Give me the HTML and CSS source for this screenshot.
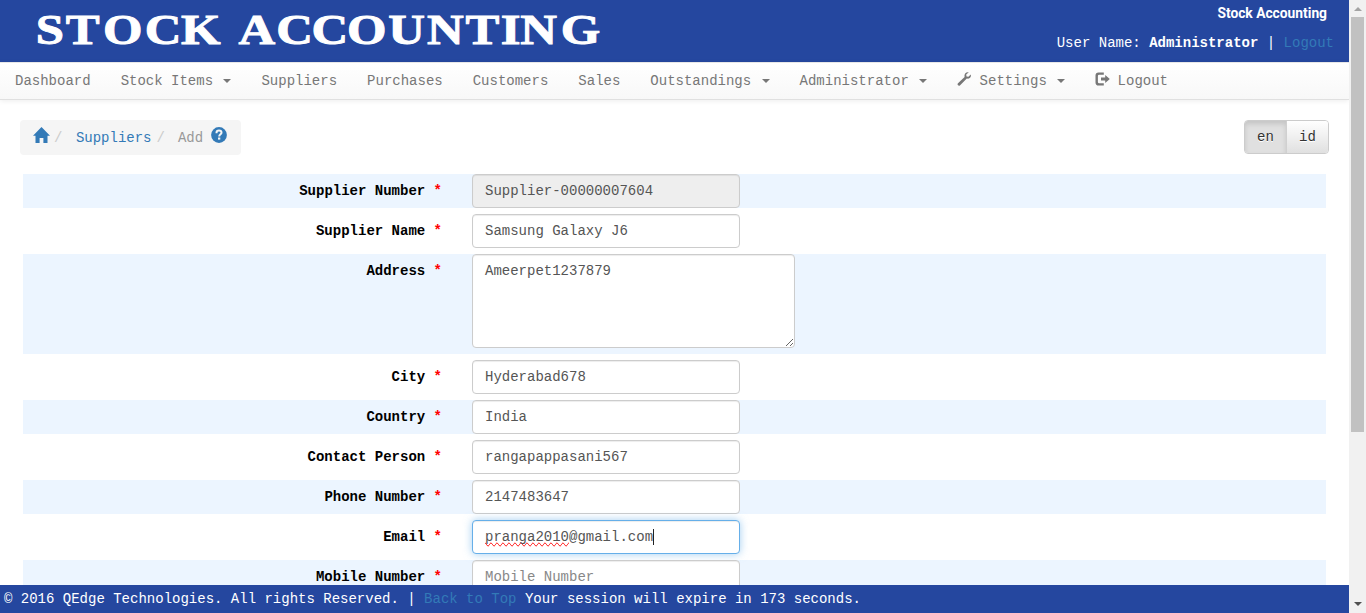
FILE: index.html
```html
<!DOCTYPE html>
<html lang="en">
<head>
<meta charset="utf-8">
<title>Stock Accounting</title>
<link rel="stylesheet" href="styles.css">
</head>
<body>
<div class="page">
  <header class="header">
    <svg class="brand" width="610" height="62" viewBox="0 0 610 62">
      <text transform="scale(1.21 1)" y="44" x="29.500 54.300 85.200 119.700 149.500 181.500 197.100 228.400 257.400 286.700 320.800 352.900 384.800 413.800 430 463.500">STOCK ACCOUNTING</text>
    </svg>
    <div class="account">
      <div class="company">Stock Accounting</div>
      <div class="user">User Name: <b>Administrator</b> | <a>Logout</a></div>
    </div>
  </header>
  <nav class="navbar">
    <a>Dashboard</a>
    <a>Stock Items <i class="caret"></i></a>
    <a>Suppliers</a>
    <a>Purchases</a>
    <a>Customers</a>
    <a>Sales</a>
    <a>Outstandings <i class="caret"></i></a>
    <a>Administrator <i class="caret"></i></a>
    <a><svg class="icon" width="14" height="14" viewBox="0 0 14 14"><path d="M11.800.3 9.200 2.500l.3 1.900 1.900.3L13.800 2.500c.3 1.500-.1 2.800-1.100 3.500-.9.700-1.900.8-2.900.5L2.900 13.400c-.6.5-1.300.4-1.900-.1-.6-.6-.6-1.400 0-2L7.600 5C6.900 2 8.800-.3 11.800.3z"/></svg> Settings <i class="caret"></i></a>
    <a><svg class="icon exit" width="15" height="14" viewBox="0 0 15 14"><path d="M8.800.5v2.300H4.200q-1.300 0-1.300 1.300v5.800q0 1.300 1.300 1.300h4.600v2.300H3.600Q.5 13.500.5 10.400V3.600Q.5.5 3.600.5zM10.200 3l4.600 4-4.600 4V8.600H6V5.400h4.200z"/></svg> Logout</a>
  </nav>
  <main class="content">
    <div class="toolbar">
      <div class="breadcrumb">
        <svg class="home" width="17" height="16" viewBox="0 0 17 16"><path d="M8.500 0 17 8.700h-2.500V16h-4.100v-5H6.600v5H2.500V8.700H0z"/></svg>
        <span class="slash first">/</span><a>Suppliers</a><span class="slash second">/</span><span class="current">Add</span>
        <svg class="help" width="16" height="16" viewBox="0 0 16 16"><circle cx="8" cy="8" r="7.900"/><path class="mark" d="M5.500 6.300V5.700C5.500 4.300 6.500 3.600 8 3.600s2.500.8 2.500 2.100c0 1.600-2.300 1.700-2.300 3.700"/><path class="dot" d="M7 10.500h2.300v2.100H7z"/></svg>
      </div>
      <div class="languages"><span class="active">en</span><span>id</span></div>
    </div>
    <form class="form">
      <div class="row"><label>Supplier Number <b>*</b></label><input class="field" value="Supplier-00000007604" readonly></div>
      <div class="row"><label>Supplier Name <b>*</b></label><input class="field" value="Samsung Galaxy J6"></div>
      <div class="row"><label>Address <b>*</b></label><textarea class="field" spellcheck="false">Ameerpet1237879</textarea></div>
      <div class="row"><label>City <b>*</b></label><input class="field" value="Hyderabad678"></div>
      <div class="row"><label>Country <b>*</b></label><input class="field" value="India"></div>
      <div class="row"><label>Contact Person <b>*</b></label><input class="field" value="rangapappasani567"></div>
      <div class="row"><label>Phone Number <b>*</b></label><input class="field" value="2147483647"></div>
      <div class="row"><label>Email <b>*</b></label><div class="field focused"><span class="misspelt">pranga2010</span>@gmail.com<i class="cursor"></i></div></div>
      <div class="row"><label>Mobile Number <b>*</b></label><input class="field" placeholder="Mobile Number"></div>
    </form>
  </main>
  <footer class="footer">© 2016 QEdge Technologies. All rights Reserved. | <a>Back to Top</a> Your session will expire in 173 seconds.</footer>
</div>
<aside class="scrollbar"><i class="arrow up"></i><span class="thumb"></span><i class="arrow down"></i></aside>
</body>
</html>
```
FILE: styles.css
```css
* { box-sizing: border-box; }
body {
  margin: 0;
  display: flex;
  width: 1366px;
  height: 613px;
  overflow: hidden;
  background: #fff;
  font: 14px/20px "Liberation Mono", monospace;
}
a { color: #337ab7; }
.page { width: 1349px; height: 613px; display: flex; flex-direction: column; overflow: hidden; }
.header { height: 62px; flex: none; display: flex; justify-content: space-between; background: #25479f; color: #fff; }
.brand { display: block; fill: #fff; font: bold 42px "Liberation Serif", serif; }
.brand text { stroke: #fff; stroke-width: .9px; }
.account { padding: 3px 15px 0 0; text-align: right; }
.company { padding-right: 7px; font: bold 13.800px/20px Roboto, "Liberation Sans", sans-serif; }
.user { margin-top: 10px; white-space: pre; }
.navbar {
  height: 38px;
  flex: none;
  display: flex;
  border-top: 1px solid #e7e7e7;
  border-bottom: 1px solid #e0e0e0;
  background: linear-gradient(#fff, #f8f8f8);
  box-shadow: 0 1px 5px rgba(0, 0, 0, .075);
}
.navbar a { padding: 8px 15px; color: #777; white-space: pre; }
.icon { display: inline-block; fill: #777; vertical-align: -1px; }
.exit { margin-right: -1px; }
.caret {
  display: inline-block;
  margin-left: 2px;
  vertical-align: middle;
  border-top: 4px solid #777;
  border-left: 4px solid transparent;
  border-right: 4px solid transparent;
}
.content { flex: 1; min-height: 0; overflow: hidden; padding: 20px 20px 0; }
.toolbar { display: flex; justify-content: space-between; height: 35px; }
.breadcrumb { display: flex; width: 221px; height: 35px; padding: 8px 13px; border-radius: 4px; background: #f5f5f5; }
.home, .help { flex: none; fill: #337ab7; }
.home { margin-top: -1px; }
.help { margin: -1px 0 0 8px; }
.mark { fill: none; stroke: #f5f5f5; stroke-width: 2; }
.dot { fill: #f5f5f5; }
.slash { color: #ccc; width: 8.4px; }
.first { margin: 0 13.500px 0 4px; }
.second { margin: 0 13px 0 5px; }
.current { color: #999; }
.languages { display: flex; width: 85px; height: 34px; border: 1px solid #ccc; border-radius: 4px; overflow: hidden; color: #333; text-shadow: 0 1px 0 #fff; }
.languages span { flex: 1; padding: 6px 0; text-align: center; background: linear-gradient(#fff, #e0e0e0); }
.languages .active { background: #e0e0e0; border-right: 1px solid #d0d0d0; box-shadow: inset 0 3px 5px rgba(0, 0, 0, .125); }
.form { width: 1303px; margin: 19px 0 0 3px; }
.row { display: flex; align-items: flex-start; margin-bottom: 6px; }
.row:nth-child(odd) { background: #ecf5ff; }
.row:nth-child(3) { height: 100px; }
label { width: 419px; margin-right: 30px; padding-top: 7px; text-align: right; font-weight: bold; color: #000; }
label b { color: #f00; }
.field {
  display: block;
  width: 268px;
  height: 34px;
  margin: 0;
  padding: 6px 12px;
  border: 1px solid #ccc;
  border-radius: 4px;
  outline: 0;
  background: #fff;
  color: #555;
  font: inherit;
  box-shadow: inset 0 1px 1px rgba(0, 0, 0, .075);
}
.field[readonly] { background: #eee; }
.field::placeholder { color: #888; }
textarea.field { width: 323px; height: 94px; overflow: hidden; }
.focused { border-color: #66afe9; box-shadow: inset 0 1px 1px rgba(0, 0, 0, .075), 0 0 8px rgba(102, 175, 233, .6); }
.misspelt { text-decoration: spelling-error; }
.cursor { display: inline-block; width: 1px; height: 16px; vertical-align: -4px; background: #222; }
.footer { height: 28px; flex: none; padding: 4px 4px; background: #25479f; color: #fff; white-space: pre; }
.scrollbar { width: 17px; height: 613px; display: flex; flex-direction: column; align-items: center; background: #f1f1f1; }
.thumb { width: 13px; height: 415px; margin-top: 6px; background: #c1c1c1; }
.arrow { border-left: 4px solid transparent; border-right: 4px solid transparent; }
.up { margin-top: 7px; border-bottom: 4px solid #a3a3a3; }
.down { margin: auto 0 7px; border-top: 4px solid #505050; }
```
